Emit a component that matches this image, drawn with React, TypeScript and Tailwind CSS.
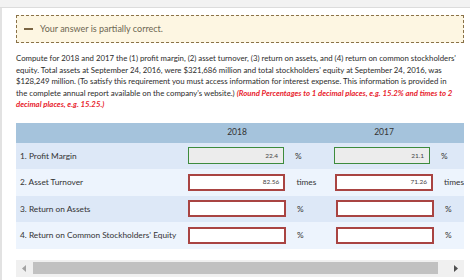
import React from "react";

const rows = [
  { label: "1. Profit Margin", unit: "%", a: "22.4", b: "21.1", ok: true },
  { label: "2. Asset Turnover", unit: "times", a: "82.56", b: "71.26", ok: false },
  { label: "3. Return on Assets", unit: "%", a: "", b: "", ok: false },
  { label: "4. Return on Common Stockholders' Equity", unit: "%", a: "", b: "", ok: false },
];

function Cell({ value, ok }: { value: string; ok: boolean }) {
  return (
    <div
      className={
        ok
          ? "w-[96px] h-[17px] border border-[#3d8b3d] bg-[#ececec] flex items-center justify-end pr-[5px] text-[6.5px] text-[#444]"
          : "w-[98px] h-[17px] border-2 border-[#a94442] bg-white flex items-center justify-end pr-[4px] text-[6.5px] text-[#444]"
      }
    >
      {value}
    </div>
  );
}

export default function App() {
  return (
    <div className="w-[470px] h-[280px] bg-white overflow-hidden font-['Lato',sans-serif] text-[#333]">
      {/* top strip */}
      <div className="h-[8px] bg-[#f2f2f2] border-b border-[#dcdcdc]" />
      <div className="border-l-2 border-[#e2e2e2] h-[272px] pl-[14px] pr-[6px] pt-[7px]">
        {/* feedback */}
        <div className="h-[28px] border border-dashed border-[#8a7248] bg-[#fdf6e2] flex items-center">
          <div className="w-[9px] h-[2px] bg-[#7a6543] ml-[7px]" />
          <span className="ml-[7px] text-[9px] text-[#6d6652]">Your answer is partially correct.</span>
        </div>

        {/* question */}
        <p className="mt-[10px] text-[7.8px] leading-[11.5px] text-[#2b2b2b] whitespace-nowrap">
          Compute for 2018 and 2017 the (1) profit margin, (2) asset turnover, (3) return on assets, and (4) return on common stockholders'
          <br />
          equity. Total assets at September 24, 2016, were $321,686 million and total stockholders' equity at September 24, 2016, was
          <br />
          $128,249 million. (To satisfy this requirement you must access information for interest expense. This information is provided in
          <br />
          the complete annual report available on the company's website.){" "}
          <span className="text-[#e8242e] italic font-bold">
            (Round Percentages to 1 decimal places, e.g. 15.2% and times to 2
            <br />
            decimal places, e.g. 15.25.)
          </span>
        </p>

        {/* table */}
        <div className="mt-[12px] overflow-hidden">
          <div className="h-[20px] bg-[#a5c3dc] flex items-center text-[8.5px] text-[#333]">
            <div className="w-[172px]" />
            <div className="w-[98px] text-center">2018</div>
            <div className="w-[50px]" />
            <div className="w-[96px] text-center">2017</div>
          </div>
          {rows.map((r, i) => (
            <div
              key={r.label}
              className={`h-[26.5px] flex items-center ${i % 2 === 0 ? "bg-[#dde8f7]" : "bg-[#edf4fd]"}`}
            >
              <div className="w-[172px] pl-[4px] text-[8.3px] text-[#333] whitespace-nowrap">{r.label}</div>
              <Cell value={r.a} ok={r.ok} />
              <div className="w-[50px] pl-[11px] text-[8.3px] text-[#333]">{r.unit}</div>
              <Cell value={r.b} ok={r.ok} />
              <div className="pl-[11px] text-[8.3px] text-[#333]">{r.unit}</div>
            </div>
          ))}
        </div>

        {/* scrollbar */}
        <div className="mt-[11px] h-[17px] bg-[#f0f0f0] flex items-center">
          <svg width="17" height="17" viewBox="0 0 17 17">
            <path d="M10 5 L6 8.5 L10 12 Z" fill="#a3a3a3" />
          </svg>
          <div className="h-[12px] w-[405px] bg-[#c1c1c1]" />
          <div className="flex-1" />
          <svg width="17" height="17" viewBox="0 0 17 17">
            <path d="M7 5 L11 8.5 L7 12 Z" fill="#505050" />
          </svg>
        </div>
        <div className="mt-[5px] h-[3px] border-t border-l border-[#dedede]" />
      </div>
    </div>
  );
}
